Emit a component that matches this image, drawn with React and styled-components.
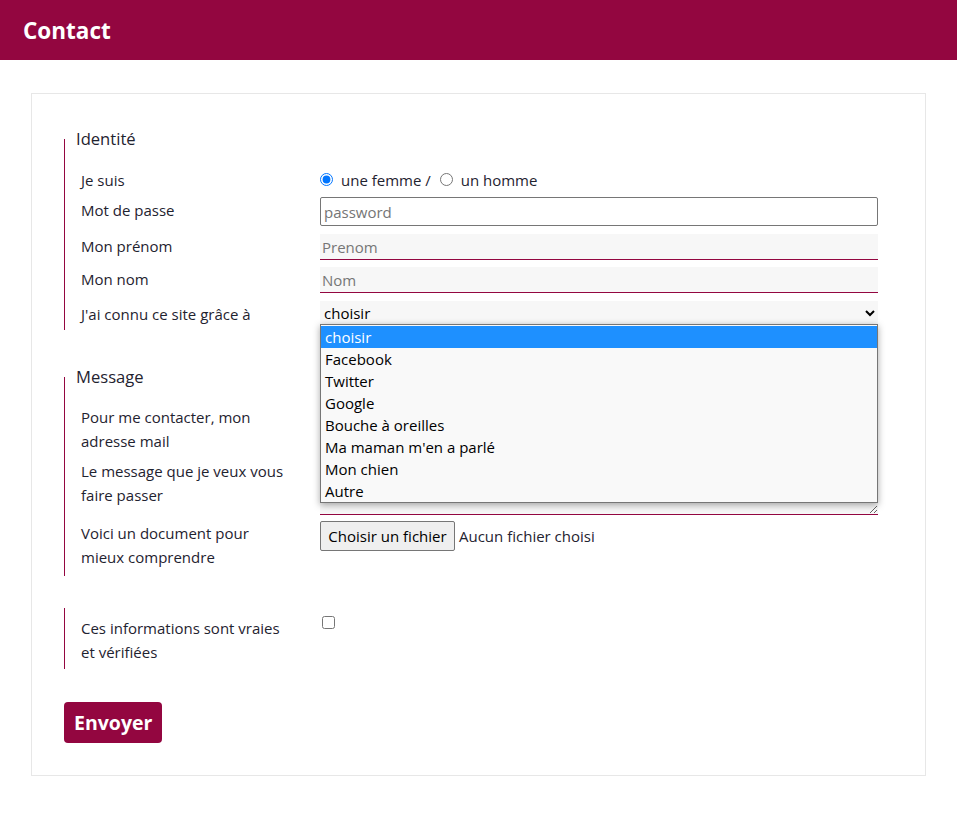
import React from "react";
import styled, { createGlobalStyle } from "styled-components";

const MAROON = "#930640";
const FONT = `"Open Sans", "Noto Sans", "Liberation Sans", sans-serif`;

const GlobalStyle = createGlobalStyle`
  * { box-sizing: border-box; }
  html, body { margin: 0; padding: 0; background: #fff; }
  body { font-family: ${FONT}; color: #1f2330; }
`;

const Header = styled.header`
  height: 60px;
  background: ${MAROON};
  display: flex;
  align-items: center;
  padding: 3px 23px 0;
`;

const Title = styled.h1`
  margin: 0;
  font-size: 22.5px;
  font-weight: 700;
  line-height: 1;
  color: #fff;
`;

const Card = styled.form`
  margin: 33px 31px 0;
  border: 1px solid #e7e7e7;
  padding: 33px 47px 32px 32px;
`;

const Fieldset = styled.fieldset`
  margin: ${(p) => p.$mt || 0}px 0 0;
  padding: ${(p) => p.$pt}px 0 ${(p) => p.$pb}px 11px;
  border: 0;
  border-left: 1px solid ${MAROON};
  min-width: 0;
`;

const Legend = styled.legend`
  padding: 0;
  font-size: 16.6px;
  line-height: 24px;
  color: #1f2330;
`;

const Row = styled.div`
  display: grid;
  grid-template-columns: 244px 1fr;
  align-items: start;
  margin-top: ${(p) => p.$mt || 0}px;
`;

const Label = styled.label`
  padding: ${(p) => p.$pt || 0}px 0 0 5px;
  font-size: 15px;
  line-height: 24px;
  color: #1f2330;
`;

const Field = styled.div`
  position: relative;
  min-width: 0;
`;

const RadioGroup = styled.div`
  display: flex;
  align-items: center;
  height: 23px;
  font-size: 15px;
  color: #1f2330;
`;

const Radio = styled.input`
  width: 13px;
  height: 13px;
  margin: 0 8px 0 ${(p) => p.$ml || 0}px;
`;

const RadioText = styled.span`
  white-space: pre;
`;

const BoxInput = styled.input`
  display: block;
  width: 100%;
  height: 29px;
  padding: 0 3px;
  border: 1px solid #767676;
  border-radius: 2px;
  font-family: ${FONT};
  font-size: 15px;
  color: #000;
  &::placeholder { color: #757575; }
`;

const LineInput = styled.input`
  display: block;
  width: 100%;
  height: 26px;
  padding: 0 2px;
  border: 0;
  border-bottom: 1px solid ${MAROON};
  border-radius: 0;
  background: #f7f7f7;
  font-family: ${FONT};
  font-size: 15px;
  color: #000;
  &::placeholder { color: #767676; }
`;

const Select = styled.select`
  display: block;
  width: 100%;
  height: 24px;
  padding: 0;
  border: 0;
  border-bottom: 1px solid ${MAROON};
  border-radius: 0;
  background: #f7f7f7;
  font-family: ${FONT};
  font-size: 15px;
  color: #000;
`;

const Dropdown = styled.ul`
  position: absolute;
  z-index: 10;
  top: 23px;
  left: 0;
  right: 0;
  margin: 0;
  padding: 1px 0 0;
  list-style: none;
  background: #f9f9f9;
  border: 1px solid #767676;
  box-shadow: 0 2px 7px rgba(0, 0, 0, 0.35);
`;

const Option = styled.li`
  height: 22px;
  padding: 0 4px;
  font-size: 15px;
  line-height: 22px;
  color: ${(p) => (p.$active ? "#fff" : "#000")};
  background: ${(p) => (p.$active ? "#1e90ff" : "transparent")};
`;

const TextArea = styled.textarea`
  display: block;
  width: 100%;
  height: 56px;
  padding: 2px;
  border: 0;
  border-bottom: 1px solid ${MAROON};
  border-radius: 0;
  background: #f7f7f7;
  font-family: ${FONT};
  font-size: 15px;
`;

const FileRow = styled.div`
  display: flex;
  align-items: center;
  gap: 4px;
  font-size: 15px;
  color: #1f2330;
`;

const FileButton = styled.button`
  width: 135px;
  height: 30px;
  padding: 0;
  border: 1px solid #767676;
  border-radius: 2px;
  background: #efefef;
  font-family: ${FONT};
  font-size: 15px;
  color: #000;
`;

const Check = styled.input`
  display: block;
  width: 13px;
  height: 13px;
  margin: 0 0 0 2px;
`;

const Submit = styled.button`
  display: block;
  margin-top: 33px;
  height: 41px;
  padding: 0 10px;
  border: 0;
  border-radius: 4px;
  background: ${MAROON};
  color: #fff;
  font-family: ${FONT};
  font-size: 19.5px;
  font-weight: 700;
`;

const options = [
  "choisir",
  "Facebook",
  "Twitter",
  "Google",
  "Bouche à oreilles",
  "Ma maman m'en a parlé",
  "Mon chien",
  "Autre",
];

export default function App() {
  return (
    <>
      <GlobalStyle />
      <Header>
        <Title>Contact</Title>
      </Header>
      <Card onSubmit={(e) => e.preventDefault()}>
        <Fieldset $pt={17} $pb={4}>
          <Legend>Identité</Legend>
          <Row>
            <Label>Je suis</Label>
            <RadioGroup>
              <Radio type="radio" name="sexe" defaultChecked />
              <RadioText>une femme / </RadioText>
              <Radio type="radio" name="sexe" $ml={5} />
              <RadioText>un homme</RadioText>
            </RadioGroup>
          </Row>
          <Row $mt={5}>
            <Label $pt={1}>Mot de passe</Label>
            <BoxInput type="password" placeholder="password" />
          </Row>
          <Row $mt={8}>
            <Label>Mon prénom</Label>
            <LineInput placeholder="Prenom" />
          </Row>
          <Row $mt={7}>
            <Label>Mon nom</Label>
            <LineInput placeholder="Nom" />
          </Row>
          <Row $mt={8}>
            <Label $pt={1}>J'ai connu ce site grâce à</Label>
            <Field>
              <Select defaultValue="choisir">
                {options.map((o) => (
                  <option key={o} value={o}>
                    {o}
                  </option>
                ))}
              </Select>
              <Dropdown>
                {options.map((o, i) => (
                  <Option key={o} $active={i === 0}>
                    {o}
                  </Option>
                ))}
              </Dropdown>
            </Field>
          </Row>
        </Fieldset>

        <Fieldset $mt={35} $pt={16} $pb={7}>
          <Legend>Message</Legend>
          <Row>
            <Label>
              Pour me contacter, mon
              <br />
              adresse mail
            </Label>
            <LineInput type="email" />
          </Row>
          <Row $mt={6}>
            <Label>
              Le message que je veux vous
              <br />
              faire passer
            </Label>
            <TextArea />
          </Row>
          <Row $mt={6}>
            <Label>
              Voici un document pour
              <br />
              mieux comprendre
            </Label>
            <FileRow>
              <FileButton type="button">Choisir un fichier</FileButton>
              <span>Aucun fichier choisi</span>
            </FileRow>
          </Row>
        </Fieldset>

        <Fieldset $mt={32} $pt={8} $pb={5}>
          <Row>
            <Label>
              Ces informations sont vraies
              <br />
              et vérifiées
            </Label>
            <div>
              <Check type="checkbox" />
            </div>
          </Row>
        </Fieldset>

        <Submit type="submit">Envoyer</Submit>
      </Card>
    </>
  );
}
